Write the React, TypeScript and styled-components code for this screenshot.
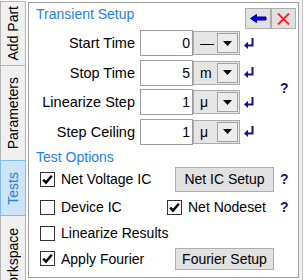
import React from 'react';
import styled, { createGlobalStyle } from 'styled-components';

const Global = createGlobalStyle`
  html, body { margin: 0; padding: 0; background: #ffffff; }
  body {
    font-family: "Liberation Sans", Arial, sans-serif;
    font-size: 14px;
    color: #000;
  }
  #root { width: 306px; height: 280px; overflow: hidden; }
`;

const Window = styled.div`
  display: flex;
  width: 306px;
  height: 280px;
  background: #fff;
  overflow: hidden;
`;

const TabStrip = styled.div`
  flex: none;
  display: flex;
  flex-direction: column;
  width: 26px;
  padding-top: 1px;
  margin-right: 2px;
`;

const Tab = styled.div<{ $h: number; $active?: boolean }>`
  flex: none;
  position: relative;
  z-index: ${p => (p.$active ? 1 : 0)};
  box-sizing: border-box;
  height: ${p => p.$h}px;
  margin-top: -1px;
  &:first-child { margin-top: 0; }
  display: flex;
  align-items: center;
  justify-content: center;
  border: 1px solid ${p => (p.$active ? '#84b9ee' : '#b4b4b4')};
  background: ${p => (p.$active ? '#cce4f7' : '#f0f0f0')};
  color: ${p => (p.$active ? '#2f7fd6' : '#000')};
`;

const TabLabel = styled.span`
  writing-mode: vertical-rl;
  transform: rotate(180deg);
  white-space: nowrap;
  font-size: 14px;
  line-height: 16px;
`;

const Panel = styled.div`
  flex: none;
  box-sizing: border-box;
  width: 271px;
  height: 276px;
  margin-top: 2px;
  border: 1px solid #a0a0a0;
  display: flex;
  flex-direction: column;
  background: #fff;
`;

const FrameEdge = styled.div`
  flex: none;
  width: 3px;
  height: 100%;
  background: #f0f0f0;
  border-right: 1px solid #c4c4c4;
`;

const Header = styled.div`
  box-sizing: border-box;
  height: 27px;
  display: flex;
  justify-content: space-between;
  align-items: flex-start;
  padding: 3px 2px 0 7px;
`;

const SectionTitle = styled.div<{ $mt?: number }>`
  color: #1f7ee8;
  font-size: 14px;
  line-height: 16px;
  margin-top: ${p => p.$mt ?? 0}px;
  padding-left: ${p => (p.$mt ? 7 : 0)}px;
`;

const ToolGroup = styled.div`
  display: flex;
  margin-top: 2px;
`;

const ToolButton = styled.button<{ $w: number }>`
  box-sizing: border-box;
  width: ${p => p.$w}px;
  height: 21px;
  padding: 0;
  margin: 0;
  border: 1px solid #adadad;
  background: #e1e1e1;
  display: flex;
  align-items: center;
  justify-content: center;
`;

const FormGrid = styled.div`
  display: grid;
  grid-template-columns: 111px 53px 47px 40px 1fr;
  grid-auto-rows: 26px;
  row-gap: 3.67px;
  margin-top: 0;
`;

const FieldLabel = styled.div`
  grid-column: 1;
  text-align: right;
  padding-right: 5px;
  align-self: center;
  white-space: nowrap;
  font-size: 14.5px;
  line-height: 16px;
`;

const NumberBox = styled.div`
  grid-column: 2;
  box-sizing: border-box;
  border: 1px solid #9c9c9c;
  background: #fff;
  text-align: right;
  padding-right: 2px;
  line-height: 24px;
`;

const Combo = styled.div`
  grid-column: 3;
  box-sizing: border-box;
  border: 1px solid #acacac;
  background: #e5e5e5;
  display: flex;
  align-items: stretch;
  margin: 1px 0;
`;

const ComboText = styled.span`
  flex: 1;
  padding-left: 6px;
  line-height: 22px;
  color: #000;
`;

const ComboArrow = styled.span`
  box-sizing: border-box;
  width: 21px;
  margin: 1px;
  border: 1px solid #a2a2a2;
  background: #ececec;
  display: flex;
  align-items: center;
  justify-content: center;
`;

const EnterCell = styled.div`
  grid-column: 4;
  display: flex;
  align-items: center;
  padding-left: 4px;
`;

const Help = styled.div`
  font-weight: bold;
  font-size: 14px;
  line-height: 16px;
  color: #17185f;
  align-self: center;
`;

const GroupHelp = styled(Help)`
  grid-column: 5;
  grid-row: 1 / span 4;
  margin-top: 1px;
`;

const OptionRow = styled.div<{ $h: number }>`
  box-sizing: border-box;
  height: ${p => p.$h}px;
  display: grid;
  grid-template-columns: 127px 113px 1fr;
  align-items: center;
  padding-left: 11px;
`;

const CheckItem = styled.label`
  display: flex;
  align-items: center;
  gap: 6px;
  white-space: nowrap;
  line-height: 16px;
`;

const Box = styled.span`
  flex: none;
  box-sizing: border-box;
  width: 15px;
  height: 15px;
  border: 1px solid #333333;
  background: #fff;
  display: flex;
  align-items: center;
  justify-content: center;
`;

const PushButton = styled.button<{ $h: number }>`
  box-sizing: border-box;
  width: 99px;
  height: ${p => p.$h}px;
  margin: 0 0 0 8px;
  padding: 0;
  border: 1px solid #adadad;
  background: #e1e1e1;
  font-family: "Liberation Sans", Arial, sans-serif;
  font-size: 14px;
  color: #000;
`;

const Check = ({ on }: { on: boolean }) => (
  <Box>
    {on && (
      <svg width="13" height="13" viewBox="0 0 13 13">
        <path d="M2.2 6.6 L5 9.6 L10.8 2.8" fill="none" stroke="#000" strokeWidth="2.4" />
      </svg>
    )}
  </Box>
);

const DownTri = () => (
  <svg width="9" height="5" viewBox="0 0 9 5">
    <path d="M0 0 H9 L4.5 5 Z" fill="#000" />
  </svg>
);

const EnterIcon = () => (
  <svg width="11" height="11" viewBox="0 0 11 11">
    <path d="M7.5 0 H9.5 V8.5 H3.5 V6.5 H7.5 Z" fill="#12128c" />
    <path d="M0 7.5 L4 3.8 V11 Z" fill="#12128c" />
  </svg>
);

const BackArrow = () => (
  <svg width="17" height="9" viewBox="0 0 17 9">
    <path d="M0.5 4.5 L6.5 0.5 V3 H16 V6 H6.5 V8.5 Z" fill="#0000ff" stroke="#00007a" strokeWidth="1" />
  </svg>
);

const CloseX = () => (
  <svg width="13" height="12" viewBox="0 0 13 12">
    <path d="M1 0.5 L12 11.5 M12 0.5 L1 11.5" stroke="#ff1e1e" strokeWidth="1.8" />
  </svg>
);

const fields = [
  { label: 'Start Time', value: '0', unit: '—' },
  { label: 'Stop Time', value: '5', unit: 'm' },
  { label: 'Linearize Step', value: '1', unit: 'μ' },
  { label: 'Step Ceiling', value: '1', unit: 'μ' },
];

export default function App() {
  return (
    <>
      <Global />
      <Window>
        <TabStrip>
          <Tab $h={65}><TabLabel>Add Part</TabLabel></Tab>
          <Tab $h={96}><TabLabel>Parameters</TabLabel></Tab>
          <Tab $h={56} $active><TabLabel>Tests</TabLabel></Tab>
          <Tab $h={95}><TabLabel>Workspace</TabLabel></Tab>
        </TabStrip>
        <Panel>
          <Header>
            <SectionTitle>Transient Setup</SectionTitle>
            <ToolGroup>
              <ToolButton $w={26}><BackArrow /></ToolButton>
              <ToolButton $w={25}><CloseX /></ToolButton>
            </ToolGroup>
          </Header>
          <FormGrid>
            {fields.map((f, i) => (
              <React.Fragment key={f.label}>
                <FieldLabel style={{ gridRow: i + 1 }}>{f.label}</FieldLabel>
                <NumberBox style={{ gridRow: i + 1 }}>{f.value}</NumberBox>
                <Combo style={{ gridRow: i + 1 }}>
                  <ComboText>{f.unit}</ComboText>
                  <ComboArrow><DownTri /></ComboArrow>
                </Combo>
                <EnterCell style={{ gridRow: i + 1 }}><EnterIcon /></EnterCell>
              </React.Fragment>
            ))}
            <GroupHelp>?</GroupHelp>
          </FormGrid>
          <SectionTitle $mt={4}>Test Options</SectionTitle>
          <OptionRow $h={29}>
            <CheckItem><Check on />Net Voltage IC</CheckItem>
            <PushButton $h={25}>Net IC Setup</PushButton>
            <Help>?</Help>
          </OptionRow>
          <OptionRow $h={27}>
            <CheckItem><Check on={false} />Device IC</CheckItem>
            <CheckItem><Check on />Net Nodeset</CheckItem>
            <Help>?</Help>
          </OptionRow>
          <OptionRow $h={25}>
            <CheckItem><Check on={false} />Linearize Results</CheckItem>
          </OptionRow>
          <OptionRow $h={26}>
            <CheckItem><Check on />Apply Fourier</CheckItem>
            <PushButton $h={22}>Fourier Setup</PushButton>
          </OptionRow>
        </Panel>
        <FrameEdge />
      </Window>
    </>
  );
}
